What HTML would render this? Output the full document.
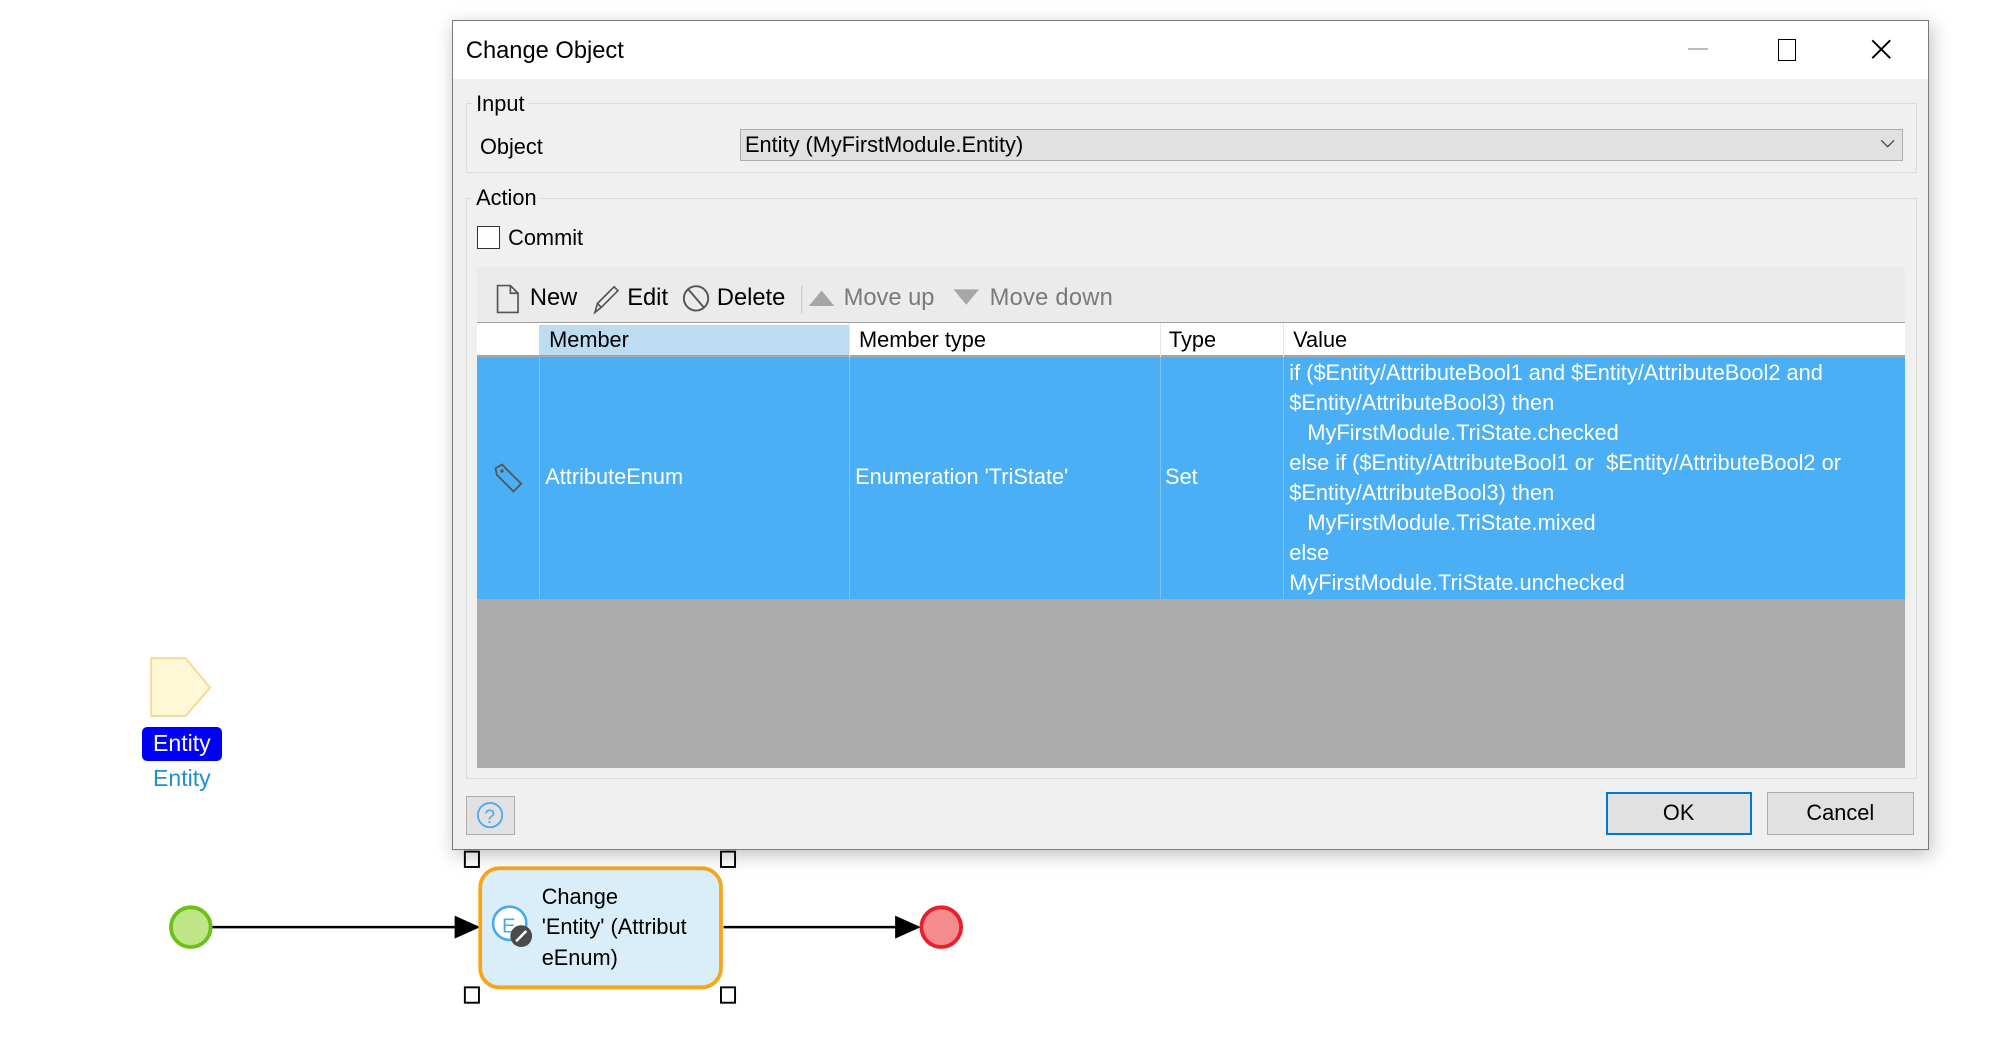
<!DOCTYPE html>
<html><head><meta charset="utf-8"><style>
html,body{margin:0;padding:0;background:#fff;overflow:hidden;width:2008px;height:1046px}
#w{position:absolute;left:0;top:0;width:1568px;height:817px;zoom:1.2806;font-family:"Liberation Sans",sans-serif;color:#000}
.a{position:absolute;white-space:nowrap}
.t{font-size:17px;line-height:20px}
</style></head><body><div id="w">

<!-- canvas -->
<svg class="a" style="left:0;top:0" width="1568" height="817">
 <polygon points="118,514 145,514 164,537 145,559 118,559" fill="#fff8d6" stroke="#fbd59a" stroke-width="1.5"/>
 <line x1="165" y1="724" x2="360" y2="724" stroke="#000" stroke-width="2"/>
 <polygon points="355,715 375,724 355,733" fill="#000"/>
 <line x1="565" y1="724" x2="702" y2="724" stroke="#000" stroke-width="2"/>
 <polygon points="699,715 719,724 699,733" fill="#000"/>
 <circle cx="149" cy="724" r="15.5" fill="#bfe587" stroke="#6cc01a" stroke-width="3"/>
 <circle cx="735" cy="724" r="15.5" fill="#f48b8e" stroke="#e8202a" stroke-width="3"/>
 <rect x="375" y="678" width="188" height="93" rx="15" fill="#daeef9" stroke="#f8a51c" stroke-width="3"/>
 <g fill="#fff" stroke="#000" stroke-width="1.5">
  <rect x="363" y="665" width="11" height="12"/><rect x="563" y="665" width="11" height="12"/>
  <rect x="363" y="771" width="11" height="12"/><rect x="563" y="771" width="11" height="12"/>
 </g>
 <circle cx="398" cy="721" r="13" fill="#fff" stroke="#49a9ee" stroke-width="2"/>
 <text x="392" y="728" font-family="Liberation Sans" font-size="16" fill="#49a9ee">E</text>
 <circle cx="407" cy="731" r="8.5" fill="#4a4a4a"/>
 <line x1="403" y1="735" x2="411" y2="727" stroke="#fff" stroke-width="2"/>
</svg>
<div class="a" style="left:111px;top:568px;width:62px;height:26px;background:#0000f5;border-radius:4px;color:#fff;font-size:18px;line-height:26px;text-align:center">Entity</div>
<div class="a" style="left:111px;top:598px;width:62px;color:#1e90d6;font-size:18px;line-height:20px;text-align:center">Entity</div>
<div class="a t" style="left:423px;top:689px;line-height:23.5px">Change<br>'Entity' (Attribut<br>eEnum)</div>

<!-- dialog -->
<div class="a" style="left:353px;top:16px;width:1152px;height:646px;background:#f0f0f0;border:1px solid #7a7a7a;box-shadow:2px 4px 14px rgba(0,0,0,.25)">
 <div class="a" style="left:0;top:0;width:1152px;height:45px;background:#fff"></div>
 <div class="a" style="left:10px;top:12px;font-size:18.5px;line-height:22px">Change Object</div>
 <div class="a" style="left:964px;top:21px;width:16px;height:1px;background:#bbb"></div>
 <div class="a" style="left:1035px;top:14px;width:12px;height:15px;border:1.5px solid #000"></div>
 <svg class="a" style="left:1107px;top:14px" width="16" height="16"><path d="M1 1L15 15M15 1L1 15" stroke="#000" stroke-width="1.5"/></svg>

 <!-- input group -->
 <div class="a" style="left:10px;top:64px;width:1132px;height:53px;border:1px solid #dcdcdc"></div>
 <div class="a t" style="left:15px;top:54px;background:#f0f0f0;padding:0 3px">Input</div>
 <div class="a t" style="left:21px;top:88px">Object</div>
 <div class="a" style="left:224px;top:84px;width:907px;height:23px;background:#e1e1e1;border:1px solid #adadad"></div>
 <div class="a t" style="left:228px;top:86px">Entity (MyFirstModule.Entity)</div>
 <svg class="a" style="left:1114px;top:92px" width="12" height="8"><path d="M1 1L6 6L11 1" stroke="#444" fill="none"/></svg>

 <!-- action group -->
 <div class="a" style="left:10px;top:138px;width:1132px;height:452px;border:1px solid #dcdcdc"></div>
 <div class="a t" style="left:15px;top:128px;background:#f0f0f0;padding:0 3px">Action</div>
 <div class="a" style="left:19px;top:160px;width:16px;height:16px;background:#fff;border:1.5px solid #333"></div>
 <div class="a t" style="left:43px;top:159px">Commit</div>

 <div class="a" style="left:19px;top:192px;width:1115px;height:43px;background:#ebebeb"></div>
 <svg class="a" style="left:33px;top:204px" width="520" height="26">
  <path d="M2 2H12L18 8V23H2Z M12 2V8H18" fill="none" stroke="#555" stroke-width="1.3"/>
  <path d="M78 23L80 16L93 3L96 6L83 19Z M80 16L83 19" fill="none" stroke="#555" stroke-width="1.3"/>
  <circle cx="157" cy="12" r="9.5" fill="none" stroke="#555" stroke-width="1.5"/>
  <line x1="151" y1="5" x2="163" y2="19" stroke="#555" stroke-width="1.5"/>
  <line x1="239.5" y1="2" x2="239.5" y2="24" stroke="#ccc"/>
  <polygon points="245,18 255,6 265,18" fill="#a6a6a6"/>
  <polygon points="358,5 378,5 368,17" fill="#a6a6a6"/>
 </svg>
 <div class="a" style="left:60px;top:205px;font-size:18.5px;line-height:22px">New</div>
 <div class="a" style="left:136px;top:205px;font-size:18.5px;line-height:22px">Edit</div>
 <div class="a" style="left:206px;top:205px;font-size:18.5px;line-height:22px">Delete</div>
 <div class="a" style="left:305px;top:205px;font-size:18.5px;line-height:22px;color:#7a7a7a">Move up</div>
 <div class="a" style="left:419px;top:205px;font-size:18.5px;line-height:22px;color:#7a7a7a;letter-spacing:.2px">Move down</div>

 <!-- table -->
 <div class="a" style="left:19px;top:235px;width:1115px;height:347px;background:#ababab;border-top:1px solid #a0a0a0">
  <div class="a" style="left:0;top:0;width:1115px;height:25px;background:#fff;border-bottom:1px solid #a0a0a0"></div>
  <div class="a" style="left:48px;top:1px;width:242px;height:24px;background:#bddcf2"></div>
  <div class="a" style="left:290px;top:0;width:1px;height:26px;background:#e5e5e5"></div>
  <div class="a" style="left:533px;top:0;width:1px;height:26px;background:#e5e5e5"></div>
  <div class="a" style="left:629px;top:0;width:1px;height:26px;background:#e5e5e5"></div>
  <div class="a t" style="left:56px;top:3px">Member</div>
  <div class="a t" style="left:298px;top:3px">Member type</div>
  <div class="a t" style="left:540px;top:3px">Type</div>
  <div class="a t" style="left:637px;top:3px">Value</div>
  <div class="a" style="left:0;top:26px;width:1115px;height:189px;background:#4aaff5"></div>
  <div class="a" style="left:48px;top:26px;width:1px;height:189px;background:#7cc4f6"></div>
  <div class="a" style="left:290px;top:26px;width:1px;height:189px;background:#7cc4f6"></div>
  <div class="a" style="left:533px;top:26px;width:1px;height:189px;background:#7cc4f6"></div>
  <div class="a" style="left:629px;top:26px;width:1px;height:189px;background:#7cc4f6"></div>
  <svg class="a" style="left:12px;top:108px" width="26" height="26"><path d="M2 5L7 2L22 17L16 23L3 10Z" fill="none" stroke="#555" stroke-width="1.4"/><circle cx="7" cy="7" r="1.3" fill="#555"/></svg>
  <div class="a t" style="left:53px;top:110px;color:#fff">AttributeEnum</div>
  <div class="a t" style="left:295px;top:110px;color:#fff">Enumeration 'TriState'</div>
  <div class="a t" style="left:537px;top:110px;color:#fff">Set</div>
  <div class="a t" style="left:634px;top:27px;color:#fff;line-height:23.4px">if ($Entity/AttributeBool1 and $Entity/AttributeBool2 and<br>$Entity/AttributeBool3) then<br>&nbsp;&nbsp;&nbsp;MyFirstModule.TriState.checked<br>else if ($Entity/AttributeBool1 or&nbsp; $Entity/AttributeBool2 or<br>$Entity/AttributeBool3) then<br>&nbsp;&nbsp;&nbsp;MyFirstModule.TriState.mixed<br>else<br>MyFirstModule.TriState.unchecked</div>
 </div>

 <!-- footer -->
 <div class="a" style="left:10px;top:605px;width:37px;height:29px;background:#e1e1e1;border:1px solid #adadad"></div>
 <svg class="a" style="left:18px;top:609px" width="22" height="22"><circle cx="11" cy="11" r="9.5" fill="none" stroke="#49a9ee" stroke-width="1.4"/><text x="6.5" y="17" font-family="Liberation Sans" font-size="15" fill="#49a9ee">?</text></svg>
 <div class="a" style="left:900px;top:602px;width:111px;height:30px;background:#e1e1e1;border:2px solid #0078d7;text-align:center;font-size:17px;line-height:30px">OK</div>
 <div class="a" style="left:1026px;top:602px;width:113px;height:32px;background:#e1e1e1;border:1px solid #adadad;text-align:center;font-size:17px;line-height:32px">Cancel</div>
</div>
</div></body></html>
